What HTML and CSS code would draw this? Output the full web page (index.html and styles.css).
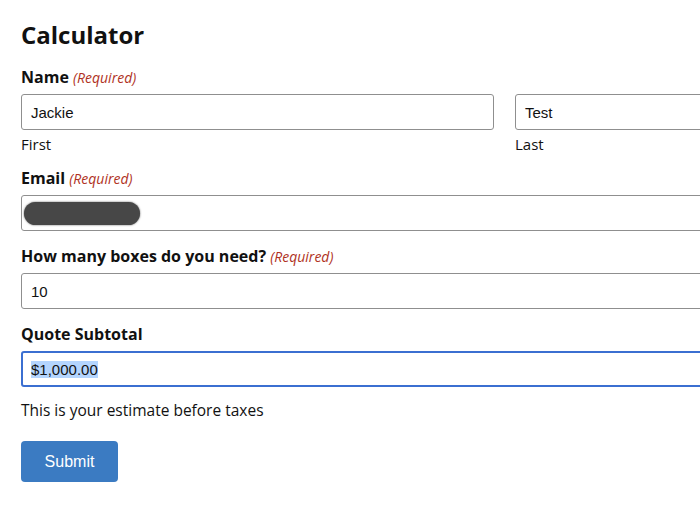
FILE: index.html
```html
<!DOCTYPE html>
<html lang="en">
<head>
    <meta charset="UTF-8">
    <meta name="viewport" content="width=device-width, initial-scale=1.0">
    <title>Calculator</title>
    <link rel="stylesheet" href="styles.css">
</head>
<body>
    <div class="page">
        <form class="calc-form">
            <h2 class="form-title">Calculator</h2>

            <div class="field">
                <label class="field-label">Name <span class="req">(Required)</span></label>
                <div class="name-row">
                    <div class="name-part">
                        <div class="input">Jackie</div>
                        <span class="sub-label">First</span>
                    </div>
                    <div class="name-part">
                        <div class="input">Test</div>
                        <span class="sub-label">Last</span>
                    </div>
                </div>
            </div>

            <div class="field">
                <label class="field-label">Email <span class="req">(Required)</span></label>
                <div class="input input-email"><span class="blur"></span></div>
            </div>

            <div class="field">
                <label class="field-label">How many boxes do you need? <span class="req">(Required)</span></label>
                <div class="input">10</div>
            </div>

            <div class="field">
                <label class="field-label">Quote Subtotal</label>
                <div class="input input-focus"><span class="selected">$1,000.00</span></div>
                <p class="hint">This is your estimate before taxes</p>
            </div>

            <button type="button" class="submit-btn">Submit</button>
        </form>
    </div>
</body>
</html>
```

FILE: styles.css
```css
body {
    margin: 0;
    background: #fff;
    font-family: "Open Sans", "DejaVu Sans", sans-serif;
    color: #111;
}
.page {
    width: 700px;
    height: 506px;
    overflow: hidden;
}
.calc-form {
    width: 967px;
    padding: 18px 0 0 21px;
}
.form-title {
    font-size: 24px;
    font-weight: 700;
    margin: 0 0 14px 0;
    line-height: 34px;
}
.field {
    margin-bottom: 14px;
}
.field-label {
    display: block;
    height: 22px;
    font-size: 16px;
    font-weight: 700;
    line-height: 22px;
    margin-bottom: 6px;
}
.req {
    color: #b0321e;
    font-style: italic;
    font-weight: 400;
    font-size: 14px;
}
.name-row {
    display: flex;
    gap: 21px;
}
.name-part {
    flex: 1;
}
.input {
    box-sizing: border-box;
    height: 36px;
    border: 1px solid #8f8f8f;
    border-radius: 3px;
    padding: 0 9px;
    display: flex;
    align-items: center;
    font-family: "Liberation Sans", Arial, sans-serif;
    font-size: 15px;
    color: #111;
}
.input-email {
    padding-left: 2px;
}
.blur {
    display: block;
    width: 116px;
    height: 23px;
    border-radius: 12px;
    background: #474747;
    box-shadow: 0 0 2px #555;
}
.input-focus {
    border: 2px solid #3b6fd1;
    padding-left: 8px;
}
.selected {
    background: #b4d5fe;
}
.sub-label {
    display: block;
    height: 18px;
    font-size: 15px;
    line-height: 18px;
    margin-top: 5px;
}
.hint {
    font-size: 15.5px;
    margin: 13px 0 0 0;
    line-height: 20px;
}
.submit-btn {
    margin-top: 7px;
    width: 97px;
    height: 41px;
    border: none;
    border-radius: 4px;
    background: #3b7bc2;
    color: #fff;
    font-family: "Liberation Sans", Arial, sans-serif;
    font-size: 16px;
    cursor: pointer;
}
```
